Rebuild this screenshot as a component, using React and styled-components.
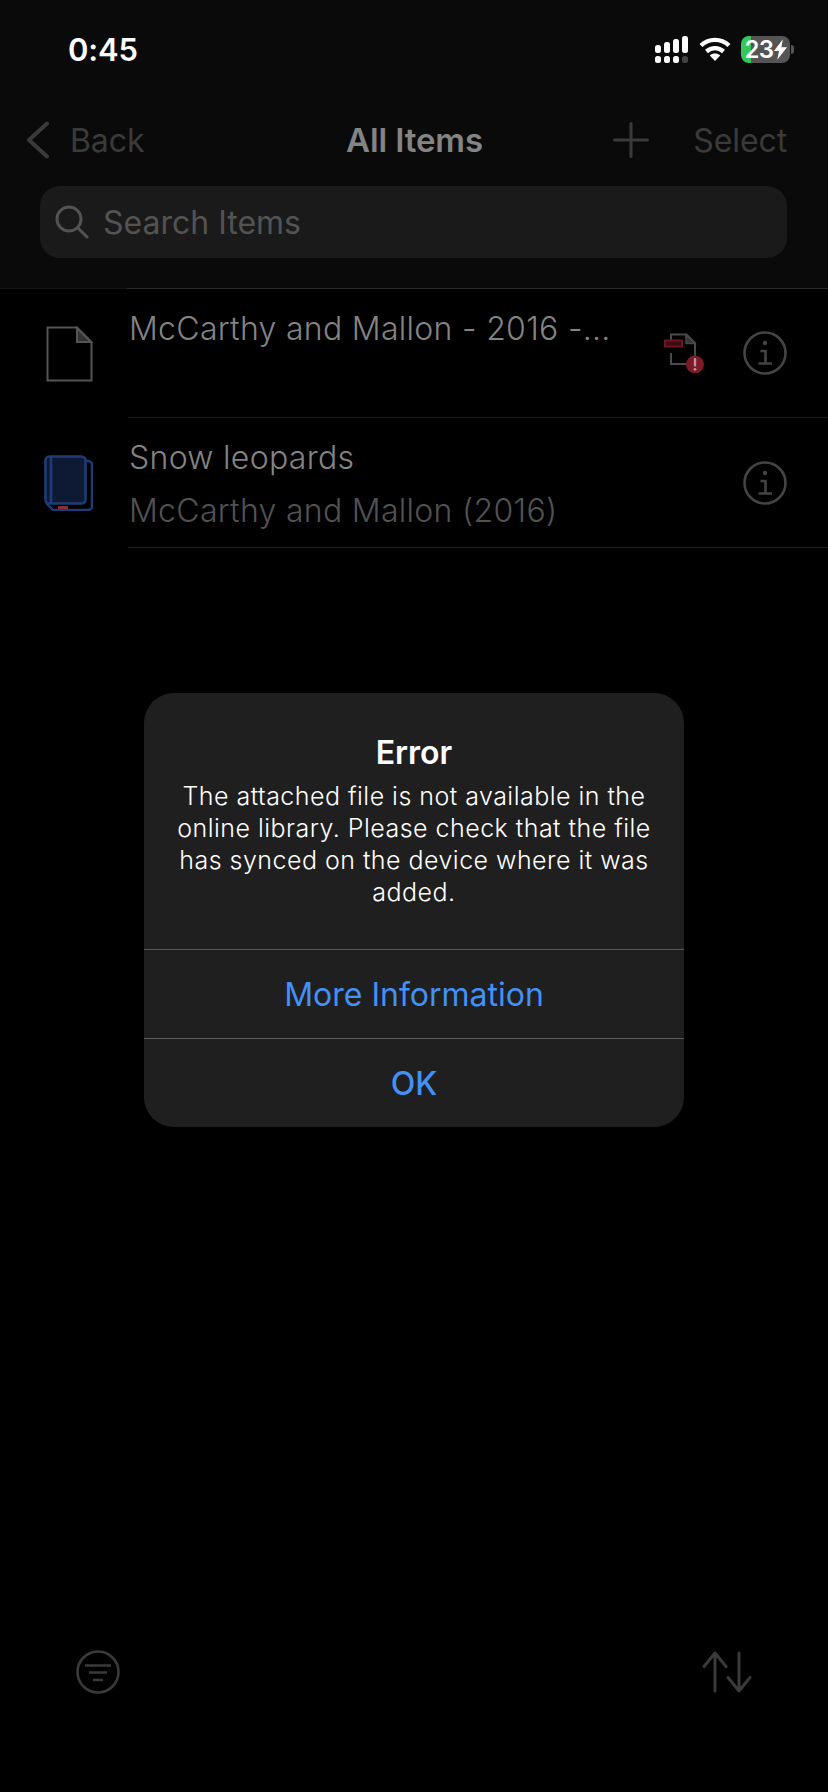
import React from "react";
import styled, { createGlobalStyle } from "styled-components";

const Global = createGlobalStyle`
  html, body { margin: 0; padding: 0; background: #000; }
  * { box-sizing: border-box; }
  body { font-family: Inter, "Liberation Sans", sans-serif; }
`;

const Screen = styled.div`
  position: relative;
  width: 828px;
  height: 1792px;
  background: #000;
  display: flex;
  flex-direction: column;
  overflow: hidden;
`;

const Header = styled.header`
  height: 289px;
  background: #0a0a0a;
  border-bottom: 1px solid;
  border-image: linear-gradient(90deg, #141414 128px, #282828 128px) 1;
  display: flex;
  flex-direction: column;
`;

const StatusBar = styled.div`
  height: 100px;
  padding: 0 34px 2px 68px;
  display: flex;
  align-items: center;
  justify-content: space-between;
`;

const Time = styled.span`
  color: #fff;
  font-size: 31px;
  font-weight: 600;
  letter-spacing: -0.2px;
`;

const StatusIcons = styled.div`
  display: flex;
  align-items: center;
  gap: 10px;
`;

const Battery = styled.div`
  width: 49px;
  height: 27px;
  border-radius: 8px;
  background: linear-gradient(90deg, #34c759 0 10px, #555 10px 100%);
  color: #fff;
  font-size: 24px;
  font-weight: 600;
  letter-spacing: -0.5px;
  display: flex;
  align-items: center;
  justify-content: center;
`;

const BatteryWrap = styled.div`
  display: flex;
  align-items: center;
  gap: 1px;
`;

const BatteryNub = styled.i`
  display: block;
  width: 3px;
  height: 9px;
  background: #555;
  border-radius: 0 3px 3px 0;
`;

const Nav = styled.nav`
  height: 80px;
  padding: 0 41px 0 26px;
  display: grid;
  grid-template-columns: 320px auto minmax(0, 1fr);
  align-items: center;
`;

const NavLeft = styled.div`
  display: flex;
  align-items: center;
  gap: 20px;
`;

const NavRight = styled.div`
  display: flex;
  align-items: center;
  justify-content: flex-end;
  gap: 44px;
`;

const NavAction = styled.span`
  color: #3a3a3a;
  font-size: 32px;
  letter-spacing: -0.1px;
`;

const NavTitle = styled.span`
  color: #848484;
  font-size: 33px;
  font-weight: 600;
  letter-spacing: -0.1px;
`;

const SearchBar = styled.div`
  margin: 6px 41px 0 40px;
  height: 72px;
  border-radius: 20px;
  background: #1a1a1a;
  padding-left: 15px;
  display: flex;
  align-items: center;
  gap: 14px;
`;

const SearchText = styled.span`
  color: #535353;
  font-size: 32px;
  letter-spacing: 0;
`;

const List = styled.div`
  display: flex;
  flex-direction: column;
`;

const Row = styled.div`
  height: ${(p) => p.$h}px;
  display: flex;
`;

const RowIcon = styled.div`
  width: 128px;
  padding-left: 44px;
  display: flex;
  align-items: center;
`;

const RowBody = styled.div`
  flex: 1;
  border-bottom: 1px solid #1e1e1e;
  padding: 17px 41px 0 1px;
  display: flex;
  justify-content: space-between;
`;

const RowText = styled.div`
  display: flex;
  flex-direction: column;
  gap: 7px;
`;

const RowTitle = styled.span`
  color: #848484;
  font-size: 32px;
  font-weight: 350;
  line-height: 46px;
  letter-spacing: 0.3px;
`;

const RowSub = styled.span`
  color: #525252;
  font-size: 32px;
  font-weight: 350;
  line-height: 46px;
  letter-spacing: 0.3px;
`;

const RowActions = styled.div`
  margin-top: -17px;
  display: flex;
  align-items: center;
  gap: 39px;
`;

const Toolbar = styled.footer`
  margin-top: auto;
  padding: 0 76px 98px 76px;
  display: flex;
  justify-content: space-between;
  align-items: center;
`;

const Overlay = styled.div`
  position: absolute;
  inset: 0;
  padding-top: 693px;
  display: flex;
  justify-content: center;
  align-items: flex-start;
`;

const Dialog = styled.div`
  width: 540px;
  height: 434px;
  border-radius: 30px;
  background: #1f1f1f;
  display: flex;
  flex-direction: column;
  color: #fff;
  text-align: center;
`;

const DialogBody = styled.div`
  height: 256px;
  padding: 39px 18px 0;
  display: flex;
  flex-direction: column;
`;

const DialogTitle = styled.div`
  font-size: 32px;
  font-weight: 600;
  line-height: 42px;
  margin-bottom: 6px;
`;

const DialogMessage = styled.div`
  font-size: 25px;
  line-height: 32px;
  font-weight: 350;
  letter-spacing: 0.47px;
`;

const DialogButton = styled.div`
  flex: 1;
  border-top: 1px solid #5a5a5a;
  color: #4391f7;
  font-size: 32px;
  font-weight: ${(p) => (p.$strong ? 500 : 400)};
  display: flex;
  align-items: center;
  justify-content: center;
`;

const Signal = () => (
  <svg width="34" height="27" viewBox="0 0 34 27" fill="#fff">
    <rect x="0" y="9" width="6" height="8" rx="2.5" />
    <rect x="9" y="6" width="6" height="11" rx="2.5" />
    <rect x="18" y="3" width="6" height="14" rx="2.5" />
    <rect x="27" y="0" width="6" height="17" rx="2.5" />
    <rect x="0" y="20" width="6" height="7" rx="2.5" />
    <rect x="9" y="20" width="6" height="7" rx="2.5" />
    <rect x="18" y="20" width="6" height="7" rx="2.5" />
    <rect x="27" y="20" width="6" height="7" rx="2.5" fill="#444" />
  </svg>
);

const Wifi = () => (
  <svg width="32" height="26" viewBox="0 0 32 26" fill="none" stroke="#fff" strokeWidth="4.4">
    <path d="M2 9.5C10 2 22 2 30 9.5" />
    <path d="M7.5 15.5C12.5 11 19.5 11 24.5 15.5" />
    <path d="M16 25l-5.2-5.6c3-2.4 7.4-2.4 10.4 0z" fill="#fff" stroke="none" />
  </svg>
);

const Bolt = () => (
  <svg width="13" height="21" viewBox="0 0 14 22" fill="#fff">
    <path d="M9.5 0L0 12.5h5.5L3.5 22 14 8.5H8z" />
  </svg>
);

const Chevron = () => (
  <svg width="24" height="38" viewBox="0 0 24 38" fill="none" stroke="#3a3a3a" strokeWidth="4" strokeLinecap="round" strokeLinejoin="round">
    <path d="M21 2.5L3 19l18 16.5" />
  </svg>
);

const Plus = () => (
  <svg width="36" height="36" viewBox="0 0 36 36" stroke="#3a3a3a" strokeWidth="3" strokeLinecap="round">
    <path d="M18 1.5v33M1.5 18h33" />
  </svg>
);

const SearchIcon = () => (
  <svg width="34" height="34" viewBox="0 0 34 34" fill="none" stroke="#535353" strokeWidth="3" strokeLinecap="round">
    <circle cx="14" cy="14" r="12" />
    <path d="M23 23l9 9" />
  </svg>
);

const FileIcon = () => (
  <svg width="49" height="56" viewBox="-2 0 49 56" fill="none">
    <path d="M1.5 1.5H31L45.5 16v38.5h-44z" stroke="#555" strokeWidth="2" />
    <path d="M31 2v14h14z" fill="#333" stroke="#555" strokeWidth="2" />
  </svg>
);

const BookIcon = () => (
  <svg width="49" height="56" viewBox="0 0 49 56" fill="none">
    <path d="M41 6h3a4 4 0 0 1 4 4v41a4 4 0 0 1-4 4H9l-7-7" stroke="#1f3c78" strokeWidth="2.4" />
    <rect x="1.5" y="1.5" width="40" height="47" rx="4" fill="#0e1a33" stroke="#1f3c78" strokeWidth="2.6" />
    <path d="M7 2v46" stroke="#1f3c78" strokeWidth="2.6" />
    <rect x="14" y="51" width="10" height="3" fill="#8a2f2f" />
  </svg>
);

const StatusIcon = () => (
  <svg width="40" height="41" viewBox="0 0 40 41" fill="none">
    <path d="M7 12V1.5h15.5L31 10v17M7 20v11h16" stroke="#4a4a4a" strokeWidth="2" />
    <path d="M22 2v8.5h9z" fill="#333" stroke="#4a4a4a" strokeWidth="1.5" />
    <rect x="1" y="7.5" width="17" height="6" fill="#3f0a12" stroke="#6e1522" strokeWidth="2" />
    <circle cx="31" cy="31.5" r="9" fill="#7d1a28" />
    <rect x="29.8" y="25" width="2.4" height="8.5" rx="1" fill="#b9959a" />
    <circle cx="31" cy="36.3" r="1.4" fill="#b9959a" />
  </svg>
);

const InfoIcon = () => (
  <svg width="44" height="44" viewBox="0 0 44 44" fill="none" stroke="#444" strokeWidth="2.6">
    <circle cx="22" cy="22" r="20.5" />
    <circle cx="22" cy="12" r="2.2" fill="#444" stroke="none" />
    <path d="M17.5 20H22.5V32M15.5 32.5H29" />
  </svg>
);

const FilterIcon = () => (
  <svg width="44" height="44" viewBox="0 0 44 44" fill="none" stroke="#3a3a3a" strokeWidth="2.6">
    <circle cx="22" cy="22" r="20.5" />
    <path d="M9 15.5h26M13 22.5h18M17 30h10" />
  </svg>
);

const SortIcon = () => (
  <svg width="50" height="42" viewBox="0 0 50 42" fill="none" stroke="#3a3a3a" strokeWidth="3" strokeLinecap="round" strokeLinejoin="round">
    <path d="M13 40V2M2 15.5L13 2l11 13.5M37 2v38M26 26.5L37 40l11-13.5" />
  </svg>
);

const RowEntry = ({ height, icon, title, subtitle, status }) => (
  <Row $h={height}>
    <RowIcon>{icon}</RowIcon>
    <RowBody>
      <RowText>
        <RowTitle>{title}</RowTitle>
        {subtitle && <RowSub>{subtitle}</RowSub>}
      </RowText>
      <RowActions>
        {status}
        <InfoIcon />
      </RowActions>
    </RowBody>
  </Row>
);

export default function App() {
  return (
    <Screen>
      <Global />
      <Header>
        <StatusBar>
          <Time>0:45</Time>
          <StatusIcons>
            <Signal />
            <Wifi />
            <BatteryWrap>
              <Battery>
                23
                <Bolt />
              </Battery>
              <BatteryNub />
            </BatteryWrap>
          </StatusIcons>
        </StatusBar>
        <Nav>
          <NavLeft>
            <Chevron />
            <NavAction>Back</NavAction>
          </NavLeft>
          <NavTitle>All Items</NavTitle>
          <NavRight>
            <Plus />
            <NavAction>Select</NavAction>
          </NavRight>
        </Nav>
        <SearchBar>
          <SearchIcon />
          <SearchText>Search Items</SearchText>
        </SearchBar>
      </Header>
      <List>
        <RowEntry
          height={129}
          icon={<FileIcon />}
          title="McCarthy and Mallon - 2016 -..."
          status={<StatusIcon />}
        />
        <RowEntry
          height={130}
          icon={<BookIcon />}
          title="Snow leopards"
          subtitle="McCarthy and Mallon (2016)"
        />
      </List>
      <Toolbar>
        <FilterIcon />
        <SortIcon />
      </Toolbar>
      <Overlay>
        <Dialog>
          <DialogBody>
            <DialogTitle>Error</DialogTitle>
            <DialogMessage>
              The attached file is not available in the online library. Please check that the file has synced on the device where it was added.
            </DialogMessage>
          </DialogBody>
          <DialogButton>More Information</DialogButton>
          <DialogButton $strong>OK</DialogButton>
        </Dialog>
      </Overlay>
    </Screen>
  );
}
